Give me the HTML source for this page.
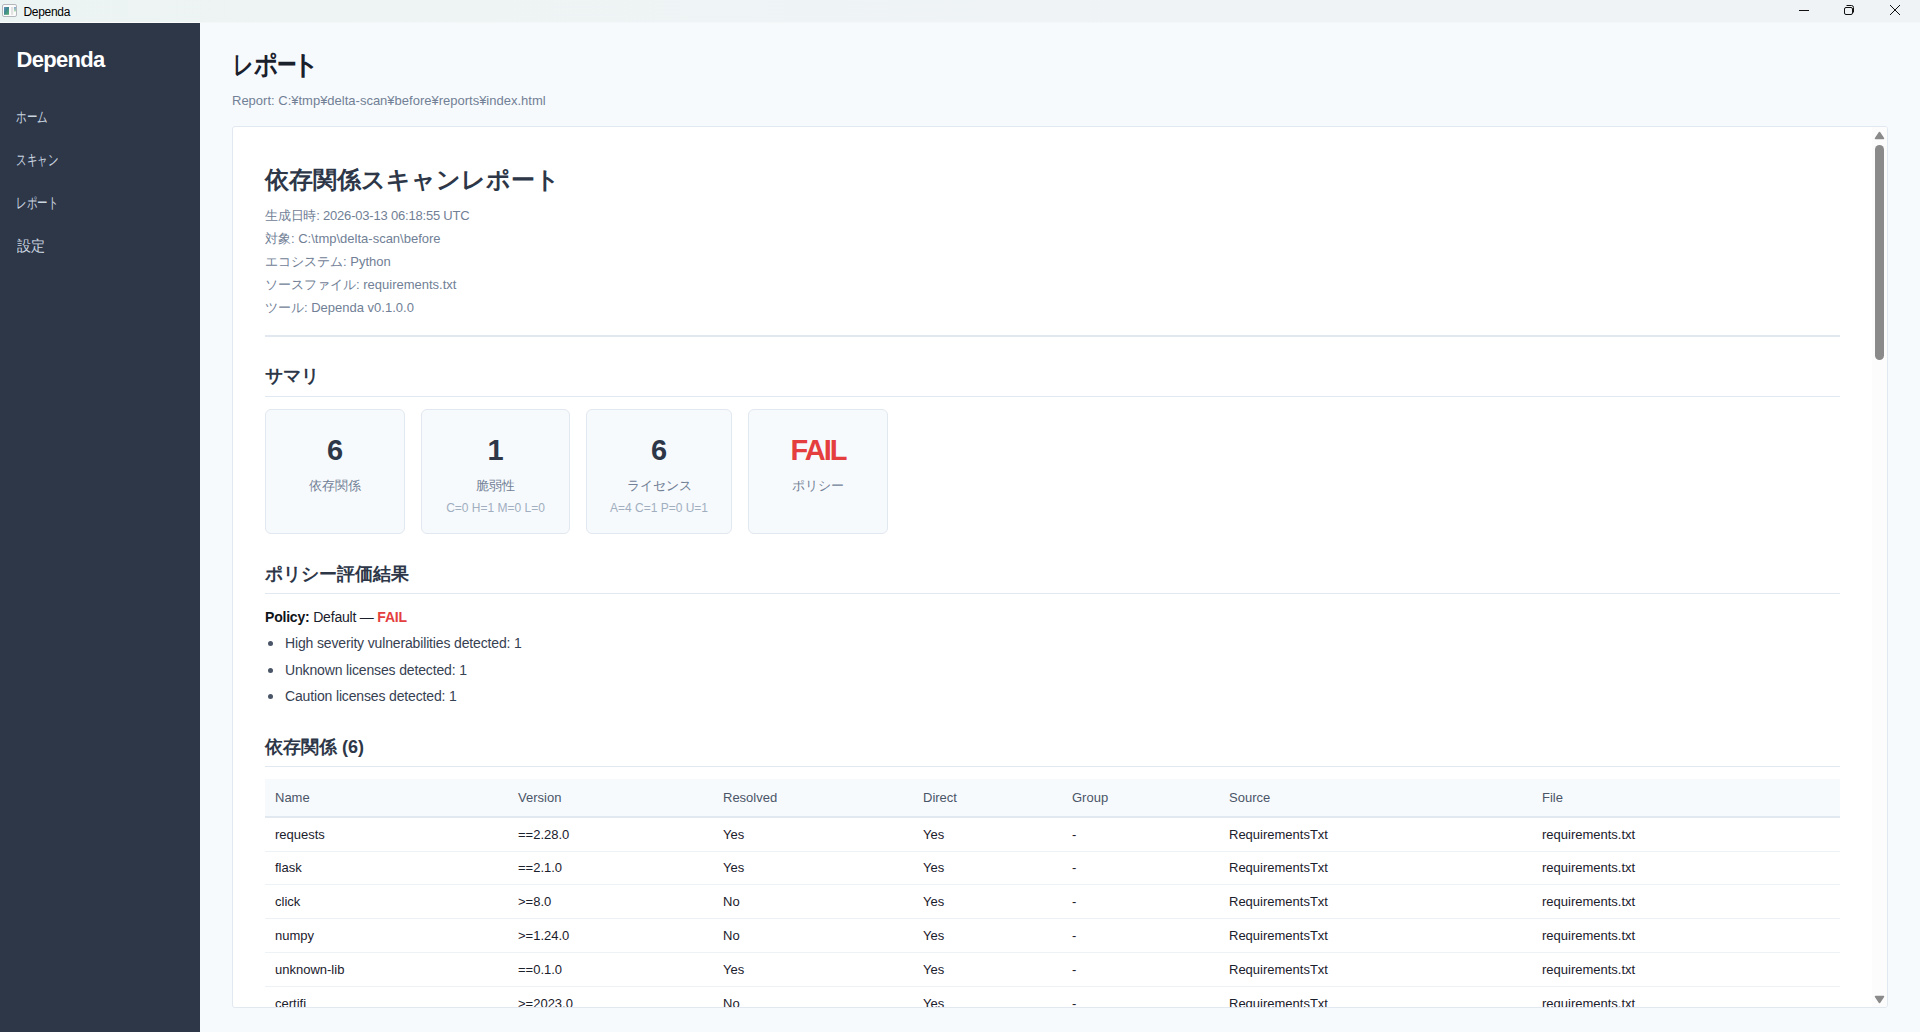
<!DOCTYPE html>
<html><head><meta charset="utf-8">
<style>
*{box-sizing:border-box;margin:0;padding:0}
html,body{width:1920px;height:1032px;overflow:hidden;background:#f7fafc;font-family:"Liberation Sans",sans-serif}
.abs{position:absolute}
#titlebar{position:absolute;left:0;top:0;width:1920px;height:22px;background:linear-gradient(90deg,#ecf3f3,#eef4f4 15%,#eff3f6 60%,#eff3f6)}
#tbl{position:absolute;left:0;top:22px;width:200px;height:1px;background:#fbfcfc}
#tbl2{position:absolute;left:200px;top:22px;width:1720px;height:1px;background:#f3f7f8}
#sidebar{position:absolute;left:0;top:23px;width:200px;height:1009px;background:#2d3748}
.brand{position:absolute;left:16.5px;top:47px;font-size:22px;letter-spacing:-0.7px;font-weight:bold;color:#fff;white-space:nowrap}
.nav{position:absolute;font-size:15px;line-height:18px;color:#cbd5e0;white-space:nowrap}
.sx{transform:scaleX(0.7);transform-origin:0 0}
#main{position:absolute;left:200px;top:23px;width:1720px;height:1009px;background:#f7fafc}
.pt{position:absolute;top:48px;font-size:27px;line-height:34px;font-weight:bold;color:#1a202c;white-space:nowrap;transform-origin:0 0}
.reportpath{position:absolute;left:232px;top:93px;font-size:13px;color:#718096;white-space:nowrap}
#panel{position:absolute;left:232px;top:126px;width:1656px;height:882px;background:#fff;border:1px solid #e2e8f0;border-radius:3px;overflow:hidden}
#sb{position:absolute;left:1639px;top:0;width:15px;height:880px;background:#fcfcfc}
.t{position:absolute;white-space:nowrap}
.h1{font-size:24px;font-weight:bold;color:#2d3748}
.meta{font-size:13px;color:#718096}
.h2{font-size:18px;font-weight:bold;color:#2d3748}
.line{position:absolute;left:32px;width:1575px;background:#e2e8f0}
.card{position:absolute;top:282px;height:125px;background:#f7fafc;border:1px solid #e2e8f0;border-radius:6px;text-align:center}
.card .num{position:absolute;left:0;right:0;top:24px;font-size:29px;font-weight:bold;color:#2d3748;line-height:32px}
.card .lbl{position:absolute;left:0;right:0;top:67px;font-size:13px;color:#718096;line-height:17px}
.card .sub{position:absolute;left:0;right:0;top:91px;font-size:12px;color:#a0aec0;line-height:14px}
.bul{list-style:none}
.bul li{position:absolute;left:52px;font-size:14px;color:#364152;white-space:nowrap;letter-spacing:-0.15px}
.bul li::before{content:"";position:absolute;left:-17px;top:5.5px;width:5px;height:5px;border-radius:50%;background:#4a5568}
table.dep{position:absolute;left:32px;top:652px;width:1575px;border-collapse:collapse;table-layout:fixed;font-size:13px}
table.dep th{background:#f7fafc;color:#4a5568;font-weight:normal;text-align:left;padding:0 10px;height:38px;border-bottom:2px solid #e2e8f0}
table.dep td{color:#1a202c;text-align:left;padding:0 10px;height:33.95px;border-bottom:1px solid #edf2f7;white-space:nowrap}
table.dep tbody tr:first-child td{height:34px}
</style></head><body>
<div id="titlebar">
  <svg width="20" height="22" style="position:absolute;left:0;top:0">
    <defs><linearGradient id="gi" x1="0" y1="0" x2="1" y2="1"><stop offset="0" stop-color="#6a8fc4"/><stop offset="0.45" stop-color="#3e8a8e"/><stop offset="1" stop-color="#5bb070"/></linearGradient>
    <linearGradient id="gj" x1="0" y1="0" x2="0" y2="1"><stop offset="0" stop-color="#86a6d0"/><stop offset="1" stop-color="#b6e0b0"/></linearGradient></defs>
    <rect x="2.5" y="4.5" width="14" height="12" rx="1.5" fill="#fbfbfb" stroke="#b4b8bc" stroke-width="1"/>
    <rect x="4" y="7" width="5" height="7.8" fill="url(#gi)"/>
    <rect x="11" y="7" width="2.2" height="7.8" fill="#e2e2e2"/>
    <rect x="14" y="7" width="2" height="4.5" fill="url(#gj)"/>
  </svg>
  <div style="position:absolute;left:23.5px;top:4px;font-size:12px;line-height:16px;color:#000;white-space:nowrap;letter-spacing:-0.3px">Dependa</div>
  <svg width="130" height="22" style="position:absolute;left:1790px;top:0">
    <rect x="9" y="10" width="10" height="1" fill="#111"/>
    <rect x="54.5" y="7.5" width="8" height="7" rx="1.5" fill="none" stroke="#111" stroke-width="1"/>
    <path d="M56.5 5.5 H61.5 Q63.5 5.5 63.5 7.5 V12.5" fill="none" stroke="#111" stroke-width="1"/>
    <path d="M100 5 L110 15 M110 5 L100 15" stroke="#111" stroke-width="1"/>
  </svg>
</div>
<div id="tbl"></div><div id="tbl2"></div>
<div id="sidebar"></div>
<div class="brand">Dependa</div>
<div class="nav sx" style="left:16.2px;top:108px">ホーム</div>
<div class="nav sx" style="left:15.6px;top:151px">スキャン</div>
<div class="nav sx" style="left:16.1px;top:193.5px">レポート</div>
<div class="nav" style="left:16.5px;top:237px;transform:scaleX(0.94);transform-origin:0 0">設定</div>

<div class="pt" style="left:233px;transform:scaleX(0.743)">レ</div>
<div class="pt" style="left:253.9px;transform:scaleX(0.88)">ポ</div>
<div class="pt" style="left:276.5px;transform:scaleX(0.727)">ー</div>
<div class="pt" style="left:292px">ト</div>
<div class="reportpath">Report: C:¥tmp¥delta-scan¥before¥reports¥index.html</div>

<div id="panel">
  <div class="t h1" style="left:32px;top:37px">依存関係スキャンレポート</div>
  <div class="t meta" style="left:32px;top:80px;letter-spacing:-0.2px">生成日時: 2026-03-13 06:18:55 UTC</div>
  <div class="t meta" style="left:32px;top:103px">対象: C:\tmp\delta-scan\before</div>
  <div class="t meta" style="left:32px;top:126px">エコシステム: Python</div>
  <div class="t meta" style="left:32px;top:149px">ソースファイル: requirements.txt</div>
  <div class="t meta" style="left:32px;top:172px">ツール: Dependa v0.1.0.0</div>
  <div class="line" style="top:208px;height:2px"></div>

  <div class="t h2" style="left:32px;top:237px">サマリ</div>
  <div class="line" style="top:269px;height:1px"></div>

  <div class="card" style="left:32px;width:140px"><div class="num">6</div><div class="lbl">依存関係</div></div>
  <div class="card" style="left:188px;width:149px"><div class="num">1</div><div class="lbl">脆弱性</div><div class="sub">C=0 H=1 M=0 L=0</div></div>
  <div class="card" style="left:353px;width:146px"><div class="num">6</div><div class="lbl">ライセンス</div><div class="sub">A=4 C=1 P=0 U=1</div></div>
  <div class="card" style="left:515px;width:140px"><div class="num" style="color:#e53e3e;letter-spacing:-2px">FAIL</div><div class="lbl">ポリシー</div></div>

  <div class="t h2" style="left:32px;top:435px">ポリシー評価結果</div>
  <div class="line" style="top:466px;height:1px"></div>

  <div class="t" style="left:32px;top:482px;font-size:14px;color:#1a202c;letter-spacing:-0.2px"><b style="color:#0f1419">Policy:</b> Default — <b style="color:#e53e3e">FAIL</b></div>
  <ul class="bul">
    <li style="top:508px">High severity vulnerabilities detected: 1</li>
    <li style="top:535px">Unknown licenses detected: 1</li>
    <li style="top:561px">Caution licenses detected: 1</li>
  </ul>

  <div class="t h2" style="left:32px;top:608px">依存関係 (6)</div>
  <div class="line" style="top:639px;height:1px"></div>

  <table class="dep">
    <colgroup><col style="width:243px"><col style="width:205px"><col style="width:200px"><col style="width:149px"><col style="width:157px"><col style="width:313px"><col style="width:308px"></colgroup>
    <thead><tr><th>Name</th><th>Version</th><th>Resolved</th><th>Direct</th><th>Group</th><th>Source</th><th>File</th></tr></thead>
    <tbody>
      <tr><td>requests</td><td>==2.28.0</td><td>Yes</td><td>Yes</td><td>-</td><td>RequirementsTxt</td><td>requirements.txt</td></tr>
      <tr><td>flask</td><td>==2.1.0</td><td>Yes</td><td>Yes</td><td>-</td><td>RequirementsTxt</td><td>requirements.txt</td></tr>
      <tr><td>click</td><td>&gt;=8.0</td><td>No</td><td>Yes</td><td>-</td><td>RequirementsTxt</td><td>requirements.txt</td></tr>
      <tr><td>numpy</td><td>&gt;=1.24.0</td><td>No</td><td>Yes</td><td>-</td><td>RequirementsTxt</td><td>requirements.txt</td></tr>
      <tr><td>unknown-lib</td><td>==0.1.0</td><td>Yes</td><td>Yes</td><td>-</td><td>RequirementsTxt</td><td>requirements.txt</td></tr>
      <tr><td>certifi</td><td>&gt;=2023.0</td><td>No</td><td>Yes</td><td>-</td><td>RequirementsTxt</td><td>requirements.txt</td></tr>
    </tbody>
  </table>

  <div id="sb">
    <svg width="15" height="880" style="position:absolute;left:0;top:0">
      <path d="M3.5 11.5 L7.5 5.5 L11.5 11.5 Z" fill="#8a8a8a" stroke="#8a8a8a" stroke-width="1.5" stroke-linejoin="round"/>
      <rect x="3" y="18" width="9" height="215" rx="4.5" fill="#8a8a8a"/>
      <path d="M3.5 869.5 L11.5 869.5 L7.5 875.5 Z" fill="#8a8a8a" stroke="#8a8a8a" stroke-width="1.5" stroke-linejoin="round"/>
    </svg>
  </div>
</div>
</body></html>
